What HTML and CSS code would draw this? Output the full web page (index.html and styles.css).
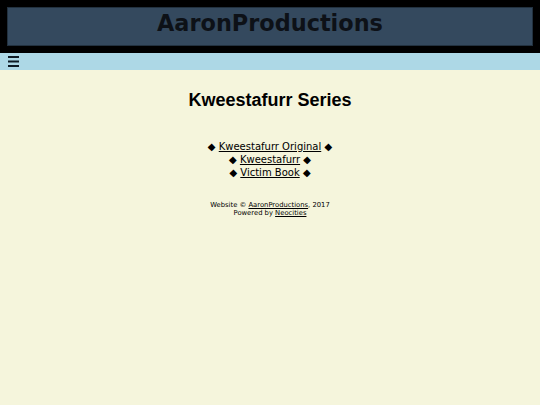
FILE: index.html
```html
<!DOCTYPE html>
<html lang="en">
<head>
  <meta charset="UTF-8">
  <title>Kweestafurr Series</title>
  <link rel="stylesheet" href="styles.css">
</head>
<body>

<div class="header">
  <div class="banner">
    <h1>AaronProductions</h1>
  </div>
</div>

<div class="nav">
  <svg class="menu" width="11" height="11" viewBox="0 0 11 11">
    <rect x="0" y="0" width="11" height="2" fill="#0d1a24"/>
    <rect x="0" y="4.5" width="11" height="2" fill="#0d1a24"/>
    <rect x="0" y="9" width="11" height="2" fill="#0d1a24"/>
  </svg>
</div>

<div class="content">
  <h2>Kweestafurr Series</h2>

  <div class="links">
    &#9670; <a href="#">Kweestafurr Original</a> &#9670;<br>
    &#9670; <a href="#">Kweestafurr</a> &#9670;<br>
    &#9670; <a href="#">Victim Book</a> &#9670;
  </div>

  <div class="footer">
    Website &copy; <a href="#">AaronProductions</a>, 2017<br>
    Powered by <a href="#">Neocities</a>
  </div>
</div>

</body>
</html>
```

FILE: styles.css
```css
body {
  margin: 0;
  background: #f5f5dc;
  font-family: "DejaVu Sans", Verdana, sans-serif;
  color: #000;
}
.header {
  background: #000;
  padding: 7px;
}
.banner {
  background: #34495e;
  border: 1px solid #22313f;
  height: 35px;
  padding-top: 2px;
  text-align: center;
}
.banner h1 {
  margin: 0;
  font-size: 22.4px;
  line-height: 26px;
  font-weight: bold;
  color: #0d1117;
}
.nav {
  background: #add8e6;
  height: 17px;
  padding-left: 8px;
  display: flex;
  align-items: center;
}
.menu {
  display: block;
}
.content {
  text-align: center;
}
.content h2 {
  font-family: "Liberation Sans", Arial, sans-serif;
  font-size: 18px;
  margin: 20px 0 0;
}
.links {
  font-size: 10px;
  line-height: 13px;
  margin-top: 29px;
}
.links a, .footer a {
  color: #000;
}
.footer {
  font-size: 6.8px;
  line-height: 8px;
  margin-top: 22px;
}
```
